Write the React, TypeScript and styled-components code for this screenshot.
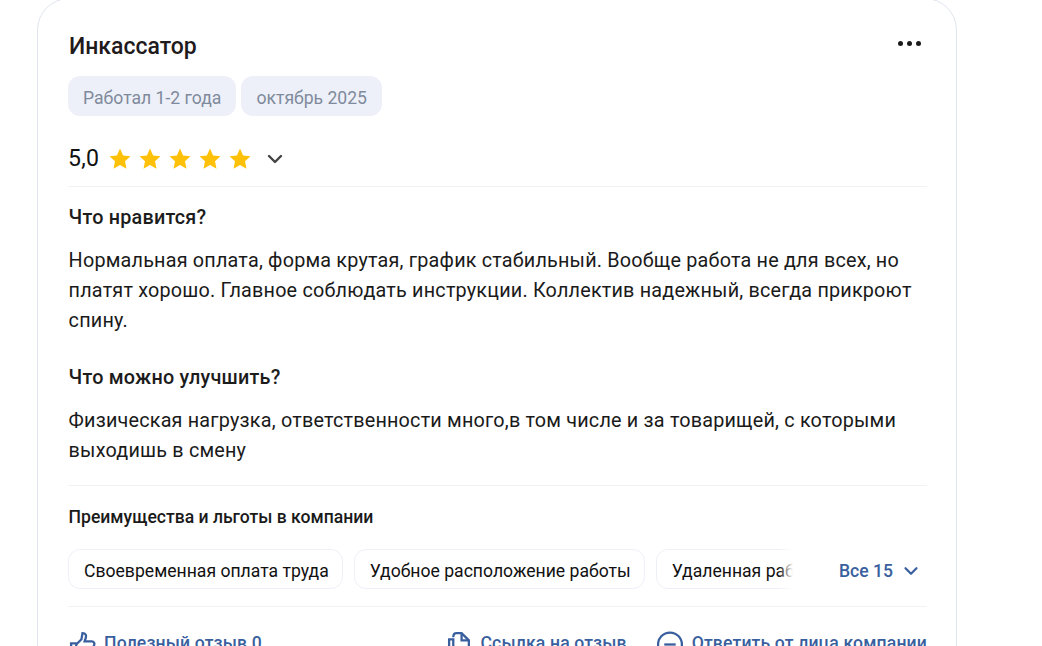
import React from "react";
import styled, { createGlobalStyle } from "styled-components";
import { ChevronDown } from "lucide-react";

const GlobalStyle = createGlobalStyle`
  html, body {
    margin: 0;
    height: 646px;
    overflow: hidden;
    background: #fff;
    font-family: Roboto, "Liberation Sans", sans-serif;
  }
`;

const benefits = ["Своевременная оплата труда", "Удобное расположение работы", "Удаленная работа"];

const Star = () => (
  <svg width="24" height="24" viewBox="0 0 24 24">
    <path
      fill="#ffc107"
      d="M12 1.600l3.100 6.900 7.400.8-5.500 5 1.500 7.400-6.500-3.800-6.500 3.800L7 14.300l-5.500-5 7.400-.8z"
    />
  </svg>
);

const App: React.FC = () => {
  return (
    <Page>
      <GlobalStyle />
      <Card>
        <Header>
          <Title>Инкассатор</Title>
          <MoreButton>
            <Dot />
            <Dot />
            <Dot />
          </MoreButton>
        </Header>
        <Tags>
          <Tag>Работал 1-2 года</Tag>
          <Tag>октябрь 2025</Tag>
        </Tags>
        <Rating>
          <Score>5,0</Score>
          <Stars>
            <Star />
            <Star />
            <Star />
            <Star />
            <Star />
          </Stars>
          <RatingToggle>
            <ChevronDown size={24} strokeWidth={2.4} color="#444" />
          </RatingToggle>
        </Rating>
        <Divider />
        <SectionTitle>Что нравится?</SectionTitle>
        <Paragraph>
          Нормальная оплата, форма крутая, график стабильный. Вообще работа не для всех, но платят
          хорошо. Главное соблюдать инструкции. Коллектив надежный, всегда прикроют спину.
        </Paragraph>
        <SectionTitle $spaced>Что можно улучшить?</SectionTitle>
        <Paragraph>
          Физическая нагрузка, ответственности много,в том числе и за товарищей, с которыми
          выходишь в смену
        </Paragraph>
        <BenefitsDivider />
        <BenefitsTitle>Преимущества и льготы в компании</BenefitsTitle>
        <BenefitsRow>
          <BenefitsList>
            {benefits.map(item => (
              <Benefit key={item}>{item}</Benefit>
            ))}
            <Fade />
          </BenefitsList>
          <ShowAll>
            Все 15
            <ChevronDown size={22} strokeWidth={2.4} />
          </ShowAll>
        </BenefitsRow>
        <FooterDivider />
        <Actions>
          <Action>
            <svg width="27" height="27" viewBox="0 0 26 26" fill="none" stroke="#3a5f9e" strokeWidth="2.2">
              <path d="M2 12h5v12H2zM7 13l5-5 1-6c3 0 4 2 3 5l-1 3h7c2 0 3 2 2 4l-2 7c-.4 1.300-1.300 2-3 2H7" />
            </svg>
            Полезный отзыв 0
          </Action>
          <ActionGroup>
            <Action>
              <svg width="25" height="27" viewBox="0 0 24 26" fill="none" stroke="#3a5f9e" strokeWidth="2.2">
                <path d="M2 8h4v15H2zM6 6c0-2 1-4 3-4h5l7 7v11c0 2-1 3-3 3H6" />
                <path d="M14 2v7h7" />
              </svg>
              Ссылка на отзыв
            </Action>
            <Action>
              <svg width="27" height="27" viewBox="0 0 26 26" fill="none" stroke="#3a5f9e" strokeWidth="2.2">
                <circle cx="12.500" cy="13" r="11.500" />
                <path d="M7 13h11" />
              </svg>
              Ответить от лица компании
            </Action>
          </ActionGroup>
        </Actions>
      </Card>
    </Page>
  );
};

const Page = styled.div`
  height: 646px;
  overflow: hidden;
  padding-left: 37px;
`;

const Card = styled.div`
  box-sizing: border-box;
  width: 920px;
  height: 760px;
  margin-top: -2px;
  padding: 33px 29px 0 30px;
  border: 1px solid #dfe4ee;
  border-radius: 32px;
  background: #fff;
`;

const Header = styled.div`
  display: flex;
  justify-content: space-between;
  align-items: flex-start;
  height: 44px;
  padding-left: 1px;
`;

const Title = styled.div`
  font-size: 23px;
  font-weight: 500;
  line-height: 30px;
  color: #1f1a1c;
`;

const MoreButton = styled.div`
  display: flex;
  gap: 4px;
  margin: 9px 6px 0 0;
`;

const Dot = styled.span`
  width: 5px;
  height: 5px;
  border-radius: 50%;
  background: #1a1a1a;
`;

const Tags = styled.div`
  display: flex;
  gap: 5.5px;
`;

const Tag = styled.div`
  height: 40px;
  padding: 0 14.5px 0 15px;
  border-radius: 12px;
  background: #edf0f8;
  color: #7f8a9c;
  font-size: 17.6px;
  line-height: 44px;
`;

const Rating = styled.div`
  display: flex;
  align-items: center;
  height: 36px;
  margin-top: 25px;
`;

const Score = styled.div`
  font-size: 23.1px;
  line-height: 36px;
  letter-spacing: 0.2px;
  color: #111;
  margin-right: 9px;
`;

const Stars = styled.div`
  display: flex;
  gap: 6px;
`;

const RatingToggle = styled.div`
  display: flex;
  margin-left: 11px;
`;

const Divider = styled.div`
  height: 1px;
  margin-top: 9px;
  background: #f0f2f6;
`;

const SectionTitle = styled.div<{ $spaced?: boolean }>`
  margin-top: ${props => (props.$spaced ? "29px" : "18px")};
  padding-left: 0.6px;
  font-size: 19.8px;
  font-weight: 500;
  line-height: 26px;
  letter-spacing: 0.22px;
  color: #1c1c1c;
`;

const Paragraph = styled.div`
  margin-top: 15px;
  padding-left: 0.6px;
  font-size: 19.8px;
  line-height: 30px;
  letter-spacing: 0.2px;
  color: #1a1a1a;
`;

const BenefitsDivider = styled(Divider)`
  margin-top: 19px;
`;

const BenefitsTitle = styled.div`
  margin-top: 20px;
  padding-left: 0.6px;
  font-size: 17.6px;
  font-weight: 500;
  line-height: 22px;
  letter-spacing: -0.02px;
  color: #1a1a1a;
`;

const BenefitsRow = styled.div`
  display: flex;
  margin-top: 21px;
`;

const BenefitsList = styled.div`
  position: relative;
  display: flex;
  gap: 11px;
  width: 725px;
  overflow: hidden;
`;

const Benefit = styled.div`
  flex: none;
  height: 38px;
  padding: 0 13px 0 15px;
  border: 1px solid #eef0f7;
  border-radius: 12px;
  font-size: 17.6px;
  line-height: 42px;
  color: #111;
`;

const Fade = styled.div`
  position: absolute;
  top: 0;
  right: 0;
  bottom: 0;
  width: 14px;
  background: linear-gradient(90deg, rgba(255, 255, 255, 0), #fff);
`;

const ShowAll = styled.div`
  display: flex;
  align-items: center;
  gap: 7px;
  margin-left: 46px;
  padding-top: 4px;
  font-size: 17.6px;
  font-weight: 500;
  color: #3a5f9e;
`;

const FooterDivider = styled(Divider)`
  margin-top: 17px;
`;

const Actions = styled.div`
  display: flex;
  justify-content: space-between;
  margin-top: 24px;
  padding-left: 1px;
`;

const ActionGroup = styled.div`
  display: flex;
  gap: 30px;
`;

const Action = styled.div`
  display: flex;
  align-items: flex-start;
  gap: 8px;
  font-size: 17.6px;
  font-weight: 500;
  line-height: 24px;
  letter-spacing: 0.15px;
  color: #3a5f9e;
`;

export default App;
